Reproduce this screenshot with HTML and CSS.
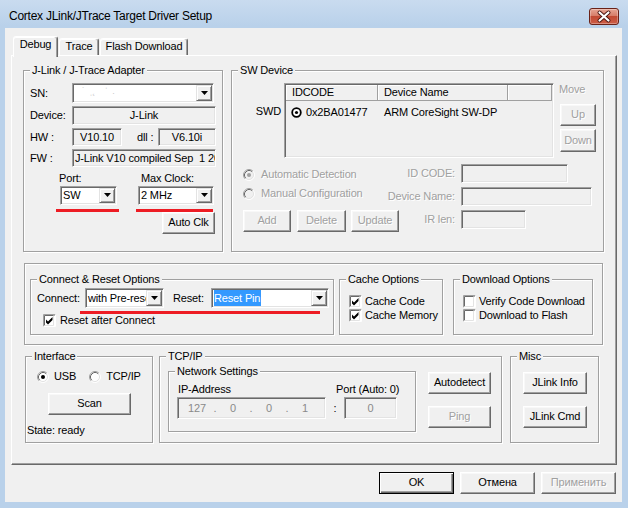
FILE: index.html
```html
<!DOCTYPE html>
<html>
<head>
<meta charset="utf-8">
<title>Cortex JLink/JTrace Target Driver Setup</title>
<link rel="stylesheet" href="styles.css">
</head>
<body>
<div class="window">
  <div class="titlebar">
    <span class="title">Cortex JLink/JTrace Target Driver Setup</span>
    <div class="close">
      <svg width="28" height="15" viewBox="0 0 28 15"><path d="M9.5 3.5l9 8m0-8l-9 8" stroke="#4a1510" stroke-width="4" stroke-linecap="round"/><path d="M9.5 3.5l9 8m0-8l-9 8" stroke="#fff" stroke-width="2.2" stroke-linecap="round"/></svg>
    </div>
  </div>
  <div class="client">
    <div class="tabs">
      <div class="tab active t-debug">Debug</div>
      <div class="tab t-trace">Trace</div>
      <div class="tab t-flash">Flash Download</div>
    </div>
    <div class="panel">
      <div class="toprow">
        <div class="group adapter">
          <span class="legend">J-Link / J-Trace Adapter</span>
          <div class="arow sn-row">
            <span class="alabel">SN:</span>
            <div class="combo c-sn"><span class="ctext specks">˙ &nbsp;ˌ˛ &nbsp; &nbsp;ˈ &nbsp;.</span><span class="dd"><svg width="7" height="4" viewBox="0 0 7 4"><path d="M0 0h7L3.5 4z"/></svg></span></div>
          </div>
          <div class="arow dev-row">
            <span class="alabel">Device:</span>
            <div class="field center f-dev">J-Link</div>
          </div>
          <div class="arow hw-row">
            <span class="alabel">HW :</span>
            <div class="field center f-hw">V10.10</div>
            <span class="dll">dll :</span>
            <div class="field center f-dll">V6.10i</div>
          </div>
          <div class="arow fw-row">
            <span class="alabel">FW :</span>
            <div class="field f-fw">J-Link V10 compiled Sep &nbsp;1 2016</div>
          </div>
          <div class="clockrow">
            <div class="pcol">
              <div class="plabel">Port:</div>
              <div class="combo c-port"><span class="ctext">SW</span><span class="dd"><svg width="7" height="4" viewBox="0 0 7 4"><path d="M0 0h7L3.5 4z"/></svg></span></div>
              <div class="redline"></div>
            </div>
            <div class="mcol">
              <div class="mlabel">Max Clock:</div>
              <div class="combo c-clock"><span class="ctext">2 MHz</span><span class="dd"><svg width="7" height="4" viewBox="0 0 7 4"><path d="M0 0h7L3.5 4z"/></svg></span></div>
              <div class="redline"></div>
            </div>
          </div>
          <button class="btn b-autoclk">Auto Clk</button>
        </div>

        <div class="group swdev">
          <span class="legend">SW Device</span>
          <div class="swtop">
            <span class="swd">SWD</span>
            <div class="list">
              <div class="lhead"><span class="hc hc1">IDCODE</span><span class="hc hc2">Device Name</span><span class="hc hc3"></span></div>
              <div class="lrow">
                <svg class="selicon" width="11" height="11" viewBox="0 0 11 11"><circle cx="5.5" cy="5.5" r="4.3" fill="#fff" stroke="#000" stroke-width="1.8"/><circle cx="5.5" cy="5.5" r="1.6"/></svg>
                <span class="lid">0x2BA01477</span>
                <span class="ldn">ARM CoreSight SW-DP</span>
              </div>
            </div>
            <div class="move">
              <div class="dis">Move</div>
              <button class="btn dis b-up">Up</button>
              <button class="btn dis b-down">Down</button>
            </div>
          </div>
          <div class="swbottom">
            <div class="radios">
              <div class="opt dis">
                <svg class="rb" width="12" height="12" viewBox="0 0 12 12"><circle cx="6" cy="6" r="5" fill="#f0f0f0"/><path d="M2.11 9.89A5.5 5.5 0 0 1 9.89 2.11" fill="none" stroke="#a0a0a0"/><path d="M9.89 2.11A5.5 5.5 0 0 1 2.11 9.89" fill="none" stroke="#fff"/><path d="M2.82 9.18A4.5 4.5 0 0 1 9.18 2.82" fill="none" stroke="#696969"/><path d="M9.18 2.82A4.5 4.5 0 0 1 2.82 9.18" fill="none" stroke="#e3e3e3"/><circle cx="6" cy="6" r="2" fill="#a0a0a0"/></svg>
                <span>Automatic Detection</span>
              </div>
              <div class="opt dis">
                <svg class="rb" width="12" height="12" viewBox="0 0 12 12"><circle cx="6" cy="6" r="5" fill="#f0f0f0"/><path d="M2.11 9.89A5.5 5.5 0 0 1 9.89 2.11" fill="none" stroke="#a0a0a0"/><path d="M9.89 2.11A5.5 5.5 0 0 1 2.11 9.89" fill="none" stroke="#fff"/><path d="M2.82 9.18A4.5 4.5 0 0 1 9.18 2.82" fill="none" stroke="#696969"/><path d="M9.18 2.82A4.5 4.5 0 0 1 2.82 9.18" fill="none" stroke="#e3e3e3"/></svg>
                <span>Manual Configuration</span>
              </div>
            </div>
            <span class="glabel dis gl1">ID CODE:</span>
            <div class="field f-id gf1"></div>
            <span class="glabel dis gl2">Device Name:</span>
            <div class="field f-dn gf2"></div>
            <div class="swbtns">
              <button class="btn dis b-add">Add</button>
              <button class="btn dis b-del">Delete</button>
              <button class="btn dis b-upd">Update</button>
            </div>
            <span class="glabel dis gl3">IR len:</span>
            <div class="field f-ir gf3"></div>
          </div>
        </div>
      </div>

      <div class="group options">
        <div class="group connect">
          <span class="legend">Connect &amp; Reset Options</span>
          <div class="crow">
            <span class="l-connect">Connect:</span>
            <div class="combo c-conn"><span class="ctext">with Pre-reset</span><span class="dd"><svg width="7" height="4" viewBox="0 0 7 4"><path d="M0 0h7L3.5 4z"/></svg></span></div>
            <span class="l-reset">Reset:</span>
            <div class="combo c-reset"><span class="ctext"><span class="hl">Reset Pin</span></span><span class="dd"><svg width="7" height="4" viewBox="0 0 7 4"><path d="M0 0h7L3.5 4z"/></svg></span></div>
          </div>
          <div class="redline r-conn"></div>
          <div class="chk chk-reset">
            <svg class="cb" width="13" height="13" viewBox="0 0 13 13"><rect x="1" y="1" width="11" height="11" fill="#fff"/><path d="M0.5 12.5V0.5H12.5" fill="none" stroke="#a0a0a0"/><path d="M1.5 11.5V1.5H11.5" fill="none" stroke="#696969"/><path d="M0.5 12.5H12.5V0.5" fill="none" stroke="#fff"/><path d="M1.5 11.5H10.5V1.5" fill="none" stroke="#e3e3e3"/><path d="M3 5.5L5 7.5L9.5 3V6L5 10.5L3 8.5Z" fill="#000"/></svg>
            <span>Reset after Connect</span>
          </div>
        </div>
        <div class="group cache">
          <span class="legend">Cache Options</span>
          <div class="chk">
            <svg class="cb" width="13" height="13" viewBox="0 0 13 13"><rect x="1" y="1" width="11" height="11" fill="#fff"/><path d="M0.5 12.5V0.5H12.5" fill="none" stroke="#a0a0a0"/><path d="M1.5 11.5V1.5H11.5" fill="none" stroke="#696969"/><path d="M0.5 12.5H12.5V0.5" fill="none" stroke="#fff"/><path d="M1.5 11.5H10.5V1.5" fill="none" stroke="#e3e3e3"/><path d="M3 5.5L5 7.5L9.5 3V6L5 10.5L3 8.5Z" fill="#000"/></svg>
            <span>Cache Code</span>
          </div>
          <div class="chk">
            <svg class="cb" width="13" height="13" viewBox="0 0 13 13"><rect x="1" y="1" width="11" height="11" fill="#fff"/><path d="M0.5 12.5V0.5H12.5" fill="none" stroke="#a0a0a0"/><path d="M1.5 11.5V1.5H11.5" fill="none" stroke="#696969"/><path d="M0.5 12.5H12.5V0.5" fill="none" stroke="#fff"/><path d="M1.5 11.5H10.5V1.5" fill="none" stroke="#e3e3e3"/><path d="M3 5.5L5 7.5L9.5 3V6L5 10.5L3 8.5Z" fill="#000"/></svg>
            <span>Cache Memory</span>
          </div>
        </div>
        <div class="group download">
          <span class="legend">Download Options</span>
          <div class="chk">
            <svg class="cb" width="13" height="13" viewBox="0 0 13 13"><rect x="1" y="1" width="11" height="11" fill="#fff"/><path d="M0.5 12.5V0.5H12.5" fill="none" stroke="#a0a0a0"/><path d="M1.5 11.5V1.5H11.5" fill="none" stroke="#696969"/><path d="M0.5 12.5H12.5V0.5" fill="none" stroke="#fff"/><path d="M1.5 11.5H10.5V1.5" fill="none" stroke="#e3e3e3"/></svg>
            <span>Verify Code Download</span>
          </div>
          <div class="chk">
            <svg class="cb" width="13" height="13" viewBox="0 0 13 13"><rect x="1" y="1" width="11" height="11" fill="#fff"/><path d="M0.5 12.5V0.5H12.5" fill="none" stroke="#a0a0a0"/><path d="M1.5 11.5V1.5H11.5" fill="none" stroke="#696969"/><path d="M0.5 12.5H12.5V0.5" fill="none" stroke="#fff"/><path d="M1.5 11.5H10.5V1.5" fill="none" stroke="#e3e3e3"/></svg>
            <span>Download to Flash</span>
          </div>
        </div>
      </div>

      <div class="botrow">
        <div class="group iface">
          <span class="legend">Interface</span>
          <div class="ifrow">
            <div class="opt">
              <svg class="rb" width="12" height="12" viewBox="0 0 12 12"><circle cx="6" cy="6" r="5" fill="#fff"/><path d="M2.11 9.89A5.5 5.5 0 0 1 9.89 2.11" fill="none" stroke="#a0a0a0"/><path d="M9.89 2.11A5.5 5.5 0 0 1 2.11 9.89" fill="none" stroke="#fff"/><path d="M2.82 9.18A4.5 4.5 0 0 1 9.18 2.82" fill="none" stroke="#696969"/><path d="M9.18 2.82A4.5 4.5 0 0 1 2.82 9.18" fill="none" stroke="#e3e3e3"/><circle cx="6" cy="6" r="2" fill="#000"/></svg>
              <span>USB</span>
            </div>
            <div class="opt opt-tcp">
              <svg class="rb" width="12" height="12" viewBox="0 0 12 12"><circle cx="6" cy="6" r="5" fill="#fff"/><path d="M2.11 9.89A5.5 5.5 0 0 1 9.89 2.11" fill="none" stroke="#a0a0a0"/><path d="M9.89 2.11A5.5 5.5 0 0 1 2.11 9.89" fill="none" stroke="#fff"/><path d="M2.82 9.18A4.5 4.5 0 0 1 9.18 2.82" fill="none" stroke="#696969"/><path d="M9.18 2.82A4.5 4.5 0 0 1 2.82 9.18" fill="none" stroke="#e3e3e3"/></svg>
              <span>TCP/IP</span>
            </div>
          </div>
          <button class="btn b-scan">Scan</button>
          <div class="state">State: ready</div>
        </div>
        <div class="group tcp">
          <span class="legend">TCP/IP</span>
          <div class="group netset">
            <span class="legend">Network Settings</span>
            <div class="ip-labels"><span class="l-ip">IP-Address</span><span>Port (Auto: 0)</span></div>
            <div class="ip-fields">
              <div class="field f-ip">
                <span class="seg">127</span><span class="dot">.</span><span class="seg">0</span><span class="dot">.</span><span class="seg">0</span><span class="dot">.</span><span class="seg">1</span>
              </div>
              <span class="colon">:</span>
              <div class="field center f-port">0</div>
            </div>
          </div>
          <div class="tcp-btns">
            <button class="btn b-tcp">Autodetect</button>
            <button class="btn dis b-tcp b-ping">Ping</button>
          </div>
        </div>
        <div class="group misc">
          <span class="legend">Misc</span>
          <button class="btn b-misc">JLink Info</button>
          <button class="btn b-misc b-cmd">JLink Cmd</button>
        </div>
      </div>
    </div>
    <div class="footer">
      <button class="btn default b-foot">OK</button>
      <button class="btn b-foot">Отмена</button>
      <button class="btn dis b-foot">Применить</button>
    </div>
  </div>
</div>
</body>
</html>
```

FILE: styles.css
```css
* { box-sizing: border-box; }
html, body { margin: 0; padding: 0; }
body {
  width: 628px; height: 508px; overflow: hidden;
  font-family: "Liberation Sans", Arial, sans-serif;
  font-size: 11px; line-height: 13px; color: #000;
  letter-spacing: -0.15px;
  background: #b9d1ea;
}
.window {
  width: 628px; height: 508px;
  display: flex; flex-direction: column;
  padding: 0 6px 6px 5px;
  background: linear-gradient(#c9dbef, #b9d1ea 26px, #b9d1ea);
}
.titlebar {
  height: 28px; flex: none;
  display: flex; align-items: flex-start; justify-content: space-between;
}
.title { font-size: 12px; line-height: 16px; letter-spacing: -0.25px; margin: 8px 0 0 4px; white-space: nowrap; }
.close {
  width: 30px; height: 17px; margin: 8px 3px 0 0;
  border: 1px solid #6a2218; border-radius: 3px;
  background: linear-gradient(#e6a594 0%, #d77d69 45%, #c24a33 50%, #cc5d47 100%);
  box-shadow: inset 0 0 0 1px rgba(255,255,255,0.3);
  display: flex;
}
.client {
  flex: 1; background: #f0f0f0;
  padding: 8px 5px 0 6px;
  display: flex; flex-direction: column;
}

/* tabs */
.tabs { display: flex; align-items: flex-end; height: 19px; margin-left: 2px; position: relative; z-index: 1; flex: none; }
.tab {
  height: 17px; padding-top: 1px;
  border: 1px solid; border-bottom: none;
  border-color: #fff #696969 transparent #fff;
  box-shadow: inset -1px 0 #a0a0a0, inset 0 1px #fff;
  border-radius: 3px 3px 0 0;
  display: flex; justify-content: center; align-items: flex-start;
  background: #f0f0f0; white-space: nowrap;
}
.tab.active { height: 21px; margin-bottom: -2px; padding-top: 1px; }
.t-debug { width: 45px; }
.t-trace { width: 40px; margin-left: 1px; }
.t-flash { width: 88px; margin-left: 1px; }

.panel {
  height: 410px; flex: none;
  border: 1px solid; border-color: #fff #696969 #696969 #fff;
  box-shadow: inset -1px -1px #a0a0a0;
  display: flex; flex-direction: column;
}

/* generic widgets */
.group {
  position: relative;
  border: 1px solid #a0a0a0;
  box-shadow: inset 1px 1px #fff, 1px 1px #fff;
}
.legend {
  position: absolute; top: -7px; left: 6px;
  padding: 0 2px; background: #f0f0f0;
  white-space: nowrap; line-height: 13px;
}
.btn {
  display: flex; align-items: center; justify-content: center;
  background: #f0f0f0; color: #000;
  border: 1px solid; border-color: #fff #696969 #696969 #fff;
  box-shadow: inset -1px -1px #a0a0a0, inset 1px 1px #f8f8f8;
  font: inherit; letter-spacing: inherit; padding: 0 0 1px 0; margin: 0;
  white-space: nowrap;
}
.btn.default {
  border-color: #000;
  box-shadow: inset 1px 1px #fff, inset -1px -1px #696969, inset -2px -2px #a0a0a0;
}
.dis { color: #a0a0a0; text-shadow: 1px 1px 0 #fff; }
.btn.dis { color: #a0a0a0; }

.combo {
  display: flex; align-items: stretch;
  background: #fff;
  border: 1px solid; border-color: #a0a0a0 #fff #fff #a0a0a0;
  box-shadow: inset 1px 1px #696969, inset -1px -1px #e3e3e3;
  padding: 1px;
}
.ctext { flex: 1; min-width: 0; padding-left: 1px; display: flex; align-items: center; overflow: hidden; white-space: nowrap; }
.dd {
  width: 16px; flex: none;
  display: flex; align-items: center; justify-content: center;
  background: #f0f0f0;
  border: 1px solid; border-color: #e3e3e3 #696969 #696969 #e3e3e3;
  box-shadow: inset 1px 1px #fff, inset -1px -1px #a0a0a0;
  padding-bottom: 1px;
}
.field {
  display: flex; align-items: center;
  background: #f0f0f0;
  border: 1px solid; border-color: #a0a0a0 #fff #fff #a0a0a0;
  box-shadow: inset 1px 1px #696969, inset -1px -1px #e3e3e3;
  padding: 0 2px; overflow: hidden; white-space: nowrap;
}
.field.center { justify-content: center; }
.redline { height: 3px; background: #ed1c24; margin-top: 4px; }

.opt { display: flex; align-items: center; gap: 6px; white-space: nowrap; }
.opt .rb { flex: none; }
.chk { display: flex; align-items: center; height: 14px; gap: 3px; white-space: nowrap; }
.chk .cb { flex: none; }

/* adapter */
.toprow { display: flex; margin: 14px 0 0 11px; flex: none; }
.adapter { width: 200px; height: 182px; padding: 12px 0 0 6px; }
.arow { display: flex; align-items: center; }
.alabel { width: 42px; flex: none; }
.sn-row { height: 20px; }
.c-sn { width: 142px; height: 20px; }
.specks { color: #c8c8c8; font-size: 9px; padding-left: 8px; align-items: flex-start; }
.dev-row { height: 19px; margin-top: 3px; }
.f-dev { width: 144px; height: 19px; }
.hw-row { height: 18px; margin-top: 3px; }
.f-hw { width: 50px; height: 18px; }
.dll { width: 21px; margin-left: 15px; }
.f-dll { width: 58px; height: 18px; }
.fw-row { height: 18px; margin-top: 3px; }
.f-fw { width: 144px; height: 18px; }
.clockrow { display: flex; margin: 5px 0 0 26px; }
.pcol { width: 63px; }
.plabel { padding-left: 3px; height: 13px; }
.c-port { width: 57px; height: 19px; margin: 1px 0 0 4px; }
.mcol { width: 77px; margin-left: 17px; }
.mlabel { padding-left: 5px; height: 13px; }
.c-clock { width: 76px; height: 19px; margin: 1px 0 0 2px; }
.b-autoclk { width: 53px; height: 22px; margin-left: 132px; }

/* sw device */
.swdev { width: 373px; height: 182px; margin-left: 8px; padding: 12px 0 0 11px; }
.swtop { display: flex; height: 75px; }
.swd { width: 41px; flex: none; text-align: right; padding: 22px 3px 0 0; }
.list {
  width: 270px; height: 75px; flex: none;
  border: 1px solid; border-color: #a0a0a0 #fff #fff #a0a0a0;
  box-shadow: inset 1px 1px #696969, inset -1px -1px #e3e3e3;
  padding: 1px; background: #f0f0f0;
}
.lhead { display: flex; height: 16px; }
.hc {
  display: flex; align-items: center; padding: 0 0 1px 6px;
  border-right: 1px solid #a0a0a0; border-bottom: 1px solid #a0a0a0;
  box-shadow: inset 1px 1px #fff; white-space: nowrap;
}
.hc1 { width: 92px; }
.hc2 { width: 130px; }
.hc3 { flex: 1; }
.lrow { display: flex; align-items: center; height: 13px; margin-top: 5px; padding-left: 5px; white-space: nowrap; }
.selicon { flex: none; }
.lid { width: 78px; margin-left: 4px; }
.move { width: 37px; margin-left: 5px; }
.b-up { width: 36px; height: 22px; margin: 8px 0 0 1px; }
.b-down { width: 36px; height: 23px; margin: 3px 0 0 1px; }
.swbottom {
  display: grid;
  grid-template-columns: 136px 70px 1fr;
  grid-template-rows: 19px 19px 22px;
  column-gap: 6px; row-gap: 4px;
  margin-top: 6px;
}
.radios { grid-column: 1 / 3; grid-row: 1 / 3; padding-top: 1px; justify-self: start; }
.radios .opt { height: 19px; }
.glabel { grid-column: 2; justify-self: end; align-self: center; white-space: nowrap; }
.gl1 { grid-row: 1; }
.gl2 { grid-row: 2; }
.gl3 { grid-row: 3; align-self: start; padding-top: 3px; }
.gf1 { grid-column: 3; grid-row: 1; width: 107px; }
.gf2 { grid-column: 3; grid-row: 2; width: 131px; }
.gf3 { grid-column: 3; grid-row: 3; width: 65px; height: 19px; }
.swbtns { grid-column: 1 / 3; grid-row: 3; justify-self: start; display: flex; }
.b-add { width: 48px; height: 22px; }
.b-del { width: 49px; height: 22px; margin-left: 6px; }
.b-upd { width: 48px; height: 22px; margin-left: 5px; }

/* options */
.options {
  width: 579px; height: 82px; margin: 11px 0 0 12px; flex: none;
  padding: 15px 0 0 5px;
  display: flex; align-items: flex-start;
}
.connect { width: 304px; height: 56px; padding: 8px 0 0 6px; }
.crow { display: flex; align-items: center; height: 20px; }
.l-connect { width: 48px; flex: none; }
.c-conn { width: 79px; height: 20px; flex: none; }
.l-reset { width: 38px; margin-left: 9px; flex: none; }
.c-reset { width: 118px; height: 20px; flex: none; }
.c-reset .ctext { padding-left: 1px; align-items: stretch; }
.hl { background: #3399ff; color: #fff; display: flex; align-items: center; padding: 0 1px 0 0; }
.r-conn { width: 240px; margin: 3px 0 0 43px; }
.chk-reset { height: 13px; margin-left: 6px; gap: 4px; }
.cache { width: 104px; height: 56px; margin-left: 5px; padding: 14px 0 0 9px; }
.download { width: 140px; height: 56px; margin-left: 10px; padding: 14px 0 0 9px; }

/* bottom groups */
.botrow { display: flex; margin: 11px 0 0 13px; flex: none; }
.iface { width: 128px; height: 87px; padding: 13px 0 0 1px; }
.ifrow { display: flex; height: 13px; margin-left: 10px; }
.ifrow .opt { gap: 5px; }
.opt-tcp { margin-left: 13px; }
.b-scan { width: 83px; height: 22px; margin: 10px 0 0 21px; }
.state { margin-top: 9px; }
.tcp { width: 343px; height: 87px; margin-left: 6px; padding: 14px 0 0 8px; display: flex; align-items: flex-start; }
.netset { width: 248px; height: 61px; padding: 11px 0 0 8px; flex: none; }
.ip-labels { display: flex; height: 13px; white-space: nowrap; }
.l-ip { width: 159px; padding-left: 1px; }
.ip-fields { display: flex; height: 22px; margin-top: 1px; }
.f-ip { width: 149px; height: 22px; padding: 0 0 0 4px; color: #8a8a8a; }
.seg { width: 30px; text-align: center; }
.dot { width: 6px; text-align: center; }
.colon { width: 18px; text-align: center; align-self: center; }
.f-port { width: 53px; height: 22px; color: #8a8a8a; }
.tcp-btns { display: flex; flex-direction: column; margin-left: 12px; padding-top: 1px; }
.b-tcp { width: 63px; height: 22px; }
.b-ping { margin-top: 12px; }
.misc { width: 89px; height: 87px; margin-left: 8px; padding: 15px 0 0 12px; }
.b-misc { width: 64px; height: 22px; }
.b-cmd { margin-top: 12px; }

/* footer */
.footer { display: flex; justify-content: flex-end; gap: 6px; margin: 7px 1px 0 0; flex: none; }
.b-foot { width: 75px; height: 22px; }
```
